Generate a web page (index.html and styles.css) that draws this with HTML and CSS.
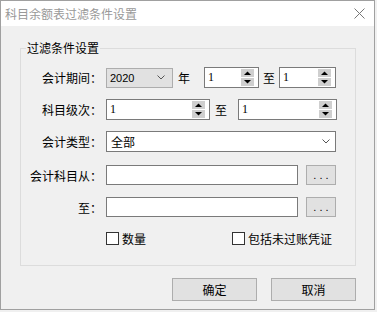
FILE: index.html
```html
<!doctype html>
<html lang="zh-CN">

<head>
  <meta charset="UTF-8" />
  <title>科目余额表过滤条件设置</title>
  <link rel="stylesheet" href="styles.css">
</head>

<body>
  <div class="window">
    <div class="titlebar">
      <span class="title">科目余额表过滤条件设置</span>
      <svg class="close" width="11" height="11" viewBox="0 0 11 11">
        <path d="M0.5 0.5 L10.5 10.5 M10.5 0.5 L0.5 10.5" stroke="#777" stroke-width="1" fill="none" />
      </svg>
    </div>

    <div class="client">
      <fieldset class="group">
        <legend>过滤条件设置</legend>

        <div class="row row-1">
          <span class="label">会计期间：</span>
          <div class="combo">
            <span class="combo-text">2020</span>
            <svg class="chevron" width="8" height="5" viewBox="0 0 8 5">
              <path d="M0.5 0.5 L4 4 L7.5 0.5" stroke="#555" fill="none" />
            </svg>
          </div>
          <span class="unit">年</span>
          <div class="spin spin-a">
            <span class="spin-text">1</span>
            <svg class="arrows" width="13" height="17" viewBox="0 0 13 17">
              <rect x="0" y="0" width="13" height="8" fill="#cfcfcf" />
              <rect x="0" y="9" width="13" height="8" fill="#cfcfcf" />
              <path d="M3 6 L10 6 L6.5 2.5 Z" fill="#000" />
              <path d="M3 11 L10 11 L6.5 14.5 Z" fill="#000" />
            </svg>
          </div>
          <span class="to">至</span>
          <div class="spin spin-b">
            <span class="spin-text">1</span>
            <svg class="arrows" width="13" height="17" viewBox="0 0 13 17">
              <rect x="0" y="0" width="13" height="8" fill="#cfcfcf" />
              <rect x="0" y="9" width="13" height="8" fill="#cfcfcf" />
              <path d="M3 6 L10 6 L6.5 2.5 Z" fill="#000" />
              <path d="M3 11 L10 11 L6.5 14.5 Z" fill="#000" />
            </svg>
          </div>
        </div>

        <div class="row row-2">
          <span class="label">科目级次：</span>
          <div class="spin spin-c">
            <span class="spin-text">1</span>
            <svg class="arrows" width="13" height="17" viewBox="0 0 13 17">
              <rect x="0" y="0" width="13" height="8" fill="#cfcfcf" />
              <rect x="0" y="9" width="13" height="8" fill="#cfcfcf" />
              <path d="M3 6 L10 6 L6.5 2.5 Z" fill="#000" />
              <path d="M3 11 L10 11 L6.5 14.5 Z" fill="#000" />
            </svg>
          </div>
          <span class="to to-wide">至</span>
          <div class="spin spin-d">
            <span class="spin-text">1</span>
            <svg class="arrows" width="13" height="17" viewBox="0 0 13 17">
              <rect x="0" y="0" width="13" height="8" fill="#cfcfcf" />
              <rect x="0" y="9" width="13" height="8" fill="#cfcfcf" />
              <path d="M3 6 L10 6 L6.5 2.5 Z" fill="#000" />
              <path d="M3 11 L10 11 L6.5 14.5 Z" fill="#000" />
            </svg>
          </div>
        </div>

        <div class="row row-3">
          <span class="label">会计类型：</span>
          <div class="select">
            <span class="select-text">全部</span>
            <svg class="chevron" width="8" height="5" viewBox="0 0 8 5">
              <path d="M0.5 0.5 L4 4 L7.5 0.5" stroke="#555" fill="none" />
            </svg>
          </div>
        </div>

        <div class="row row-4">
          <span class="label">会计科目从：</span>
          <div class="field"></div>
          <button class="browse">. . .</button>
        </div>

        <div class="row row-5">
          <span class="label">至：</span>
          <div class="field"></div>
          <button class="browse">. . .</button>
        </div>

        <div class="row row-checks">
          <label class="check check-qty"><span class="box"></span>数量</label>
          <label class="check check-post"><span class="box"></span>包括未过账凭证</label>
        </div>
      </fieldset>

      <div class="actions">
        <button class="btn">确定</button>
        <button class="btn">取消</button>
      </div>
    </div>
  </div>
</body>

</html>
```

FILE: styles.css
```css
body {
  margin: 0;
  padding: 0;
  background-color: #f0f0f0;
  font-family: "Noto Sans CJK SC", "Liberation Sans", sans-serif;
  font-size: 12px;
  color: #000;
}

.window {
  box-sizing: border-box;
  width: 375px;
  height: 310px;
  border: 1px solid #a0a0a0;
  background-color: #f0f0f0;
}

.titlebar {
  height: 25px;
  background-color: #ffffff;
  display: flex;
  align-items: center;
  justify-content: space-between;
  padding: 0 9px 0 4px;
}

.title {
  color: #999999;
  font-size: 12px;
  line-height: 25px;
}

.close {
  display: block;
}

.client {
  padding: 14px 0 0 19px;
}

.group {
  box-sizing: border-box;
  width: 336px;
  margin: 0;
  padding: 0 0 20px 0;
  border: 1px solid #dcdcdc;
}

.group legend {
  margin-left: 5px;
  padding: 0 1px;
  line-height: 16px;
  font-size: 12px;
}

.row {
  display: flex;
  align-items: center;
  height: 21px;
  margin-top: 11px;
}

.row-4 {
  height: 20px;
  margin-top: 13px;
}

.row-5 {
  height: 20px;
  margin-top: 12px;
}

.row-checks {
  height: 13px;
  margin-top: 15px;
  padding-left: 85px;
}

.label {
  width: 81px;
  margin-right: 4px;
  text-align: right;
  white-space: nowrap;
}

.combo {
  box-sizing: border-box;
  width: 67px;
  height: 20px;
  border: 1px solid #adadad;
  background-color: #e1e1e1;
  display: flex;
  align-items: center;
  justify-content: space-between;
  padding: 0 7px 0 3px;
}

.combo-text {
  font-family: "Liberation Sans", sans-serif;
  font-size: 11px;
}

.chevron {
  display: block;
}

.unit {
  margin-left: 5px;
  margin-right: 14px;
}

.spin {
  box-sizing: border-box;
  height: 21px;
  border: 1px solid #7a7a7a;
  background-color: #ffffff;
  display: flex;
  align-items: center;
  justify-content: space-between;
  padding: 0 4px 0 3px;
}

.spin-text {
  font-family: "Liberation Serif", serif;
  font-size: 12px;
}

.arrows {
  display: block;
}

.spin-a {
  width: 55px;
}

.spin-b {
  width: 57px;
}

.spin-c {
  width: 104px;
}

.spin-d {
  width: 99px;
}

.to {
  margin: 0 4px;
}

.to-wide {
  margin: 0 11px 0 5px;
}

.select {
  box-sizing: border-box;
  width: 230px;
  height: 21px;
  border: 1px solid #7a7a7a;
  background-color: #ffffff;
  display: flex;
  align-items: center;
  justify-content: space-between;
  padding: 0 5px 0 4px;
}

.field {
  box-sizing: border-box;
  width: 192px;
  height: 20px;
  border: 1px solid #7a7a7a;
  background-color: #ffffff;
}

.browse {
  box-sizing: border-box;
  width: 30px;
  height: 20px;
  margin: 0 0 0 8px;
  padding: 0;
  border: 1px solid #adadad;
  background-color: #e1e1e1;
  font-family: "Liberation Sans", sans-serif;
  font-size: 11px;
  line-height: 16px;
  color: #000;
}

.check {
  display: flex;
  align-items: center;
  gap: 3px;
  white-space: nowrap;
}

.check-post {
  margin-left: 86px;
}

.box {
  box-sizing: border-box;
  width: 13px;
  height: 13px;
  border: 1px solid #333333;
  background-color: #ffffff;
}

.actions {
  width: 336px;
  display: flex;
  justify-content: flex-end;
  gap: 14px;
  margin-top: 12px;
}

.btn {
  box-sizing: border-box;
  width: 85px;
  height: 23px;
  padding: 0;
  border: 1px solid #adadad;
  background-color: #e1e1e1;
  font-family: "Noto Sans CJK SC", sans-serif;
  font-size: 12px;
  color: #000;
}
```
